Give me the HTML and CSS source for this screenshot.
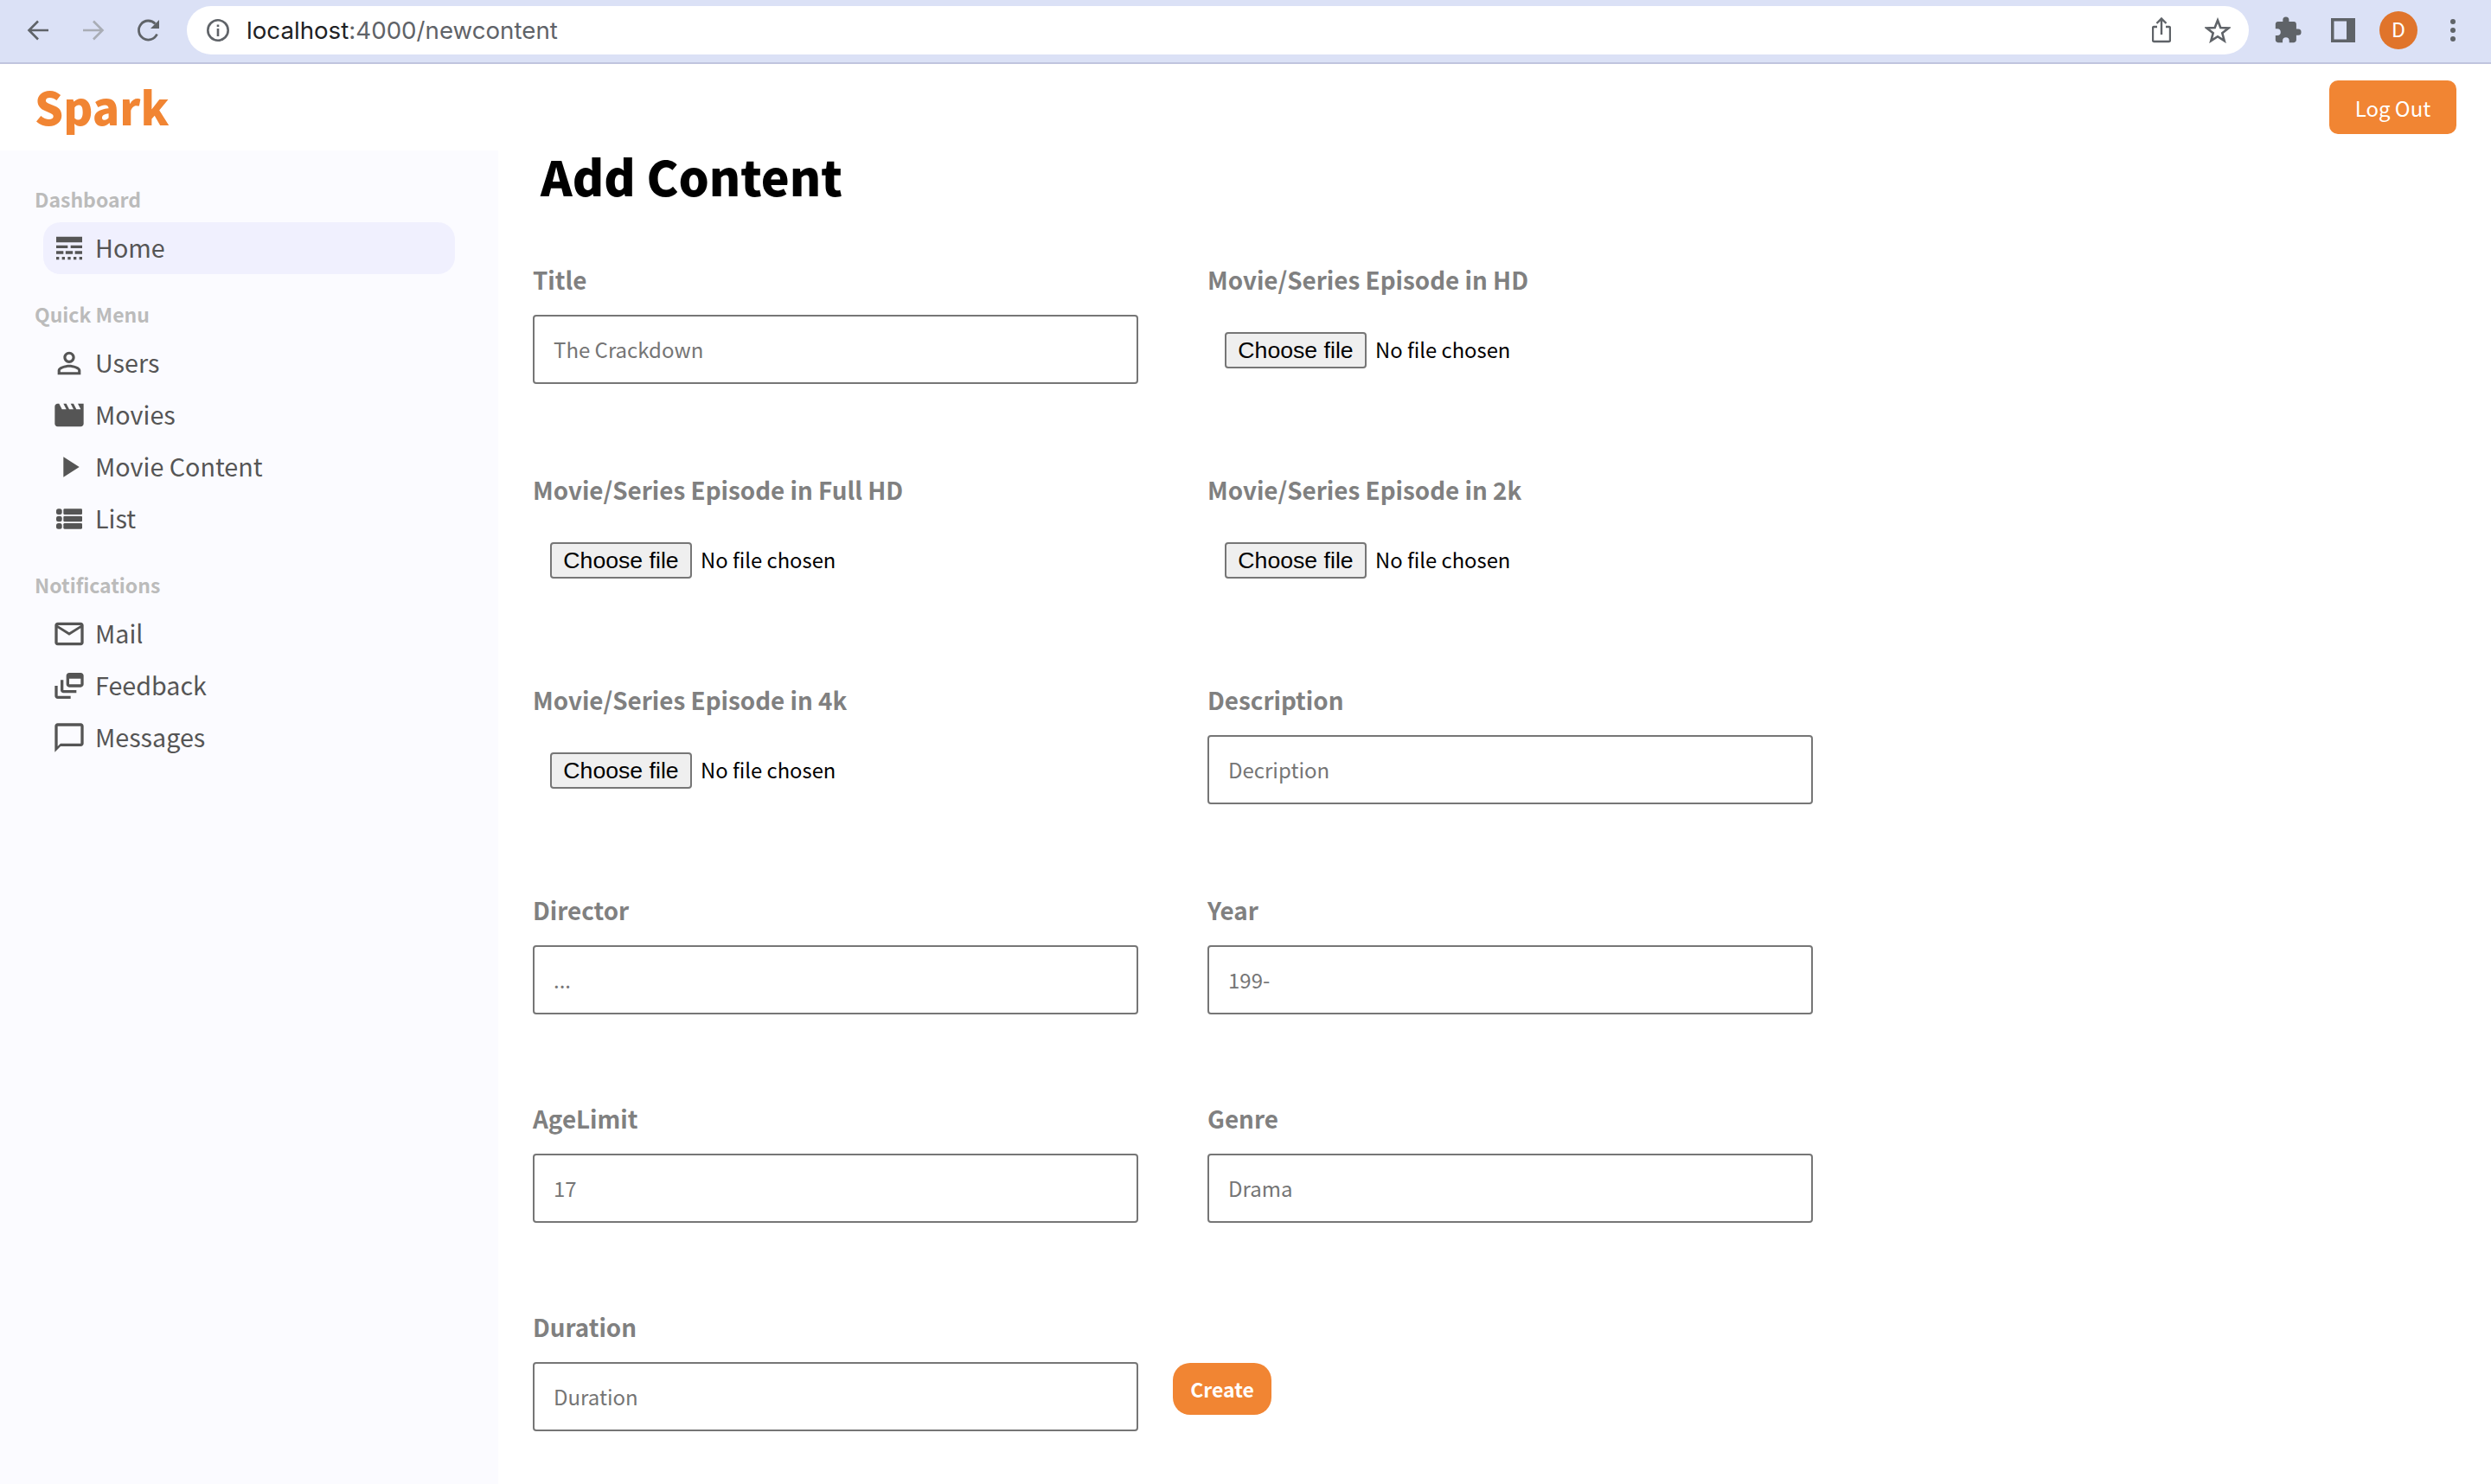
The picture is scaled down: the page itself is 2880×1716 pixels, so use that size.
FILE: index.html
```html
<!DOCTYPE html>
<html lang="en">
<head>
  <meta charset="UTF-8" />
  <title>Spark</title>
  <link rel="stylesheet" href="styles.css">
</head>
<body>
  <div class="browser-bar">
    <svg class="nav-icon" viewBox="0 0 28 28"><path d="M26 14H4M14 3.500 3.500 14 14 24.500" fill="none" stroke="#5f6368" stroke-width="2.600"/></svg>
    <svg class="nav-icon" viewBox="0 0 28 28"><path d="M2 14h22M14 3.500 24.500 14 14 24.500" fill="none" stroke="#a9adb5" stroke-width="2.600"/></svg>
    <svg class="nav-icon" viewBox="0 0 28 28"><path d="M23.500 18.500A11 11 0 1 1 21.500 6.500" fill="none" stroke="#5f6368" stroke-width="2.800"/><path d="M26 2v10H16z" fill="#5f6368"/></svg>
    <div class="url-box">
      <svg class="info-icon" viewBox="0 0 28 28"><circle cx="14" cy="14" r="11.700" fill="none" stroke="#5f6368" stroke-width="2.600"/><path d="M12.700 12h2.600v9h-2.600zM12.700 7.500h2.600v2.600h-2.600z" fill="#5f6368"/></svg>
      <span class="url-text">localhost<span class="url-path">:4000/newcontent</span></span>
      <svg class="share-icon" viewBox="0 0 22 30"><path d="M6 11H2.500a1.500 1.500 0 0 0-1.500 1.500v14A1.500 1.500 0 0 0 2.500 28h17a1.500 1.500 0 0 0 1.500-1.500v-14a1.500 1.500 0 0 0-1.500-1.500H16M11 20V2M5.500 7 11 1.500 16.500 7" fill="none" stroke="#5f6368" stroke-width="2.400"/></svg>
      <svg class="star-icon" viewBox="0 0 30 30"><path d="M15 3.500 18.300 12 27.500 12.500 20.300 18.300 22.700 27.200 15 22.200 7.300 27.200 9.700 18.300 2.500 12.500 11.700 12z" fill="none" stroke="#5f6368" stroke-width="2.600"/></svg>
    </div>
    <svg class="puzzle-icon" viewBox="0 0 24 24"><path d="M20.500 11H19V7c0-1.100-.9-2-2-2h-4V3.500a2.500 2.500 0 0 0-5 0V5H4c-1.100 0-2 .9-2 2v3.800h1.500a2.700 2.700 0 0 1 0 5.400H2V20c0 1.100.9 2 2 2h3.800v-1.500a2.700 2.700 0 0 1 5.400 0V22H17c1.100 0 2-.9 2-2v-4h1.500a2.500 2.500 0 0 0 0-5z" fill="#5f6368"/></svg>
    <svg class="panel-icon" viewBox="0 0 28 28"><path d="M0 0h28v28H0zM3.500 3.500v21H18v-21z" fill="#5f6368" fill-rule="evenodd"/></svg>
    <div class="avatar">D</div>
    <div class="menu-dots"><span></span><span></span><span></span></div>
  </div>

  <header class="topbar">
    <div class="logo">Spark</div>
    <button class="logout-btn">Log Out</button>
  </header>

  <div class="layout">
    <aside class="sidebar">
      <section class="side-group">
        <h3 class="side-title">Dashboard</h3>
        <ul class="side-list">
          <li class="side-item active">
            <svg class="side-icon" viewBox="0 0 24 24"><path d="M3 16h5v-2H3v2zm6.500 0h5v-2h-5v2zm6.500 0h5v-2h-5v2zM3 20h2v-2H3v2zm4 0h2v-2H7v2zm4 0h2v-2h-2v2zm4 0h2v-2h-2v2zm4 0h2v-2h-2v2zM3 12h8v-2H3v2zm10 0h8v-2h-8v2zM3 4v4h18V4H3z"/></svg>
            Home
          </li>
        </ul>
      </section>
      <section class="side-group">
        <h3 class="side-title">Quick Menu</h3>
        <ul class="side-list">
          <li class="side-item">
            <svg class="side-icon" viewBox="0 0 24 24"><path d="M12 5.900c1.160 0 2.100.94 2.100 2.100s-.94 2.100-2.100 2.100S9.900 9.160 9.900 8s.94-2.100 2.100-2.100m0 9c2.970 0 6.100 1.460 6.100 2.100v1.100H5.900V17c0-.64 3.130-2.100 6.100-2.100M12 4C9.790 4 8 5.790 8 8s1.790 4 4 4 4-1.790 4-4-1.790-4-4-4zm0 9c-2.670 0-8 1.340-8 4v3h16v-3c0-2.660-5.330-4-8-4z"/></svg>
            Users
          </li>
          <li class="side-item">
            <svg class="side-icon" viewBox="0 0 24 24"><path d="M18 4l2 4h-3l-2-4h-2l2 4h-3l-2-4H8l2 4H7L5 4H4c-1.100 0-1.990.9-1.990 2L2 18c0 1.100.9 2 2 2h16c1.100 0 2-.9 2-2V4h-4z"/></svg>
            Movies
          </li>
          <li class="side-item">
            <svg class="side-icon" viewBox="0 0 24 24"><path d="M8 5v14l11-7z"/></svg>
            Movie Content
          </li>
          <li class="side-item">
            <svg class="side-icon" viewBox="0 0 24 24"><rect x="3" y="5" width="4" height="4" rx="1.500"/><rect x="3" y="10" width="4" height="4" rx="1.500"/><rect x="3" y="15" width="4" height="4" rx="1.500"/><rect x="8" y="5" width="13" height="4" rx=".8"/><rect x="8" y="10" width="13" height="4" rx=".8"/><rect x="8" y="15" width="13" height="4" rx=".8"/></svg>
            List
          </li>
        </ul>
      </section>
      <section class="side-group">
        <h3 class="side-title">Notifications</h3>
        <ul class="side-list">
          <li class="side-item">
            <svg class="side-icon" viewBox="0 0 24 24"><path d="M20 4H4c-1.100 0-1.990.9-1.990 2L2 18c0 1.100.9 2 2 2h16c1.100 0 2-.9 2-2V6c0-1.100-.9-2-2-2zm0 14H4V8l8 5 8-5v10zm-8-7L4 6h16l-8 5z"/></svg>
            Mail
          </li>
          <li class="side-item">
            <svg class="side-icon" viewBox="0 0 24 24"><path d="M8 8H6v7c0 1.100.9 2 2 2h9v-2H8V8zM20 3h-8c-1.100 0-2 .9-2 2v6c0 1.100.9 2 2 2h8c1.100 0 2-.9 2-2V5c0-1.100-.9-2-2-2zm0 8h-8V7h8v4zM4 12H2v7c0 1.100.9 2 2 2h9v-2H4v-7z"/></svg>
            Feedback
          </li>
          <li class="side-item">
            <svg class="side-icon" viewBox="0 0 24 24"><path d="M20 2H4c-1.100 0-2 .9-2 2v18l4-4h14c1.100 0 2-.9 2-2V4c0-1.100-.9-2-2-2zm0 14H6l-2 2V4h16v12z"/></svg>
            Messages
          </li>
        </ul>
      </section>
    </aside>

    <main class="content">
      <h1 class="page-title">Add Content</h1>
      <form class="content-form">
        <div class="form-row">
          <div class="form-item">
            <label>Title</label>
            <input type="text" placeholder="The Crackdown" />
          </div>
          <div class="form-item">
            <label>Movie/Series Episode in HD</label>
            <div class="file-field"><button type="button" class="file-btn">Choose file</button><span class="file-name">No file chosen</span></div>
          </div>
        </div>
        <div class="form-row">
          <div class="form-item">
            <label>Movie/Series Episode in Full HD</label>
            <div class="file-field"><button type="button" class="file-btn">Choose file</button><span class="file-name">No file chosen</span></div>
          </div>
          <div class="form-item">
            <label>Movie/Series Episode in 2k</label>
            <div class="file-field"><button type="button" class="file-btn">Choose file</button><span class="file-name">No file chosen</span></div>
          </div>
        </div>
        <div class="form-row">
          <div class="form-item">
            <label>Movie/Series Episode in 4k</label>
            <div class="file-field"><button type="button" class="file-btn">Choose file</button><span class="file-name">No file chosen</span></div>
          </div>
          <div class="form-item">
            <label>Description</label>
            <input type="text" placeholder="Decription" />
          </div>
        </div>
        <div class="form-row">
          <div class="form-item">
            <label>Director</label>
            <input type="text" placeholder="..." />
          </div>
          <div class="form-item">
            <label>Year</label>
            <input type="text" placeholder="199-" />
          </div>
        </div>
        <div class="form-row">
          <div class="form-item">
            <label>AgeLimit</label>
            <input type="text" placeholder="17" />
          </div>
          <div class="form-item">
            <label>Genre</label>
            <input type="text" placeholder="Drama" />
          </div>
        </div>
        <div class="form-row form-row-last">
          <div class="form-item">
            <label>Duration</label>
            <input type="text" placeholder="Duration" />
          </div>
          <button type="button" class="create-btn">Create</button>
        </div>
      </form>
    </main>
  </div>
</body>
</html>
```

FILE: styles.css
```css
* { margin: 0; padding: 0; box-sizing: border-box; }

html, body {
  height: 100%;
}

body {
  font-family: "Noto Sans CJK JP", "Source Sans Pro", "Open Sans", sans-serif;
  background: #fff;
  display: flex;
  flex-direction: column;
  overflow: hidden;
}

/* browser chrome */
.browser-bar {
  height: 74px;
  flex-shrink: 0;
  display: flex;
  align-items: center;
  padding: 0 30px 2px;
  background: #dbe1f6;
  border-bottom: 2px solid #c0c4de;
}

.nav-icon {
  width: 28px;
  height: 28px;
  margin-right: 36px;
}

.url-box {
  width: 2384px;
  height: 56px;
  margin-left: -6px;
  padding: 0 21px 0 22px;
  display: flex;
  align-items: center;
  background: #fff;
  border-radius: 28px;
}

.info-icon {
  width: 28px;
  height: 28px;
  margin-right: 19px;
}

.url-text {
  flex: 1;
  font-family: "Inter", sans-serif;
  font-size: 27.700px;
  color: #202124;
}

.url-path {
  color: #5f6368;
}

.share-icon {
  width: 22px;
  height: 30px;
  margin-right: 39px;
}

.star-icon {
  width: 30px;
  height: 30px;
}

.puzzle-icon {
  width: 34px;
  height: 34px;
  margin-left: 28px;
}

.panel-icon {
  width: 28px;
  height: 28px;
  margin-left: 33px;
}

.avatar {
  width: 44px;
  height: 44px;
  margin-left: 28px;
  border-radius: 50%;
  background: #e0742b;
  color: #fff;
  font-family: "Roboto", sans-serif;
  font-size: 24px;
  line-height: 44px;
  text-align: center;
}

.menu-dots {
  margin-left: 38px;
  display: flex;
  flex-direction: column;
  gap: 4px;
}

.menu-dots span {
  width: 6px;
  height: 6px;
  border-radius: 50%;
  background: #5f6368;
}

/* app header */
.topbar {
  height: 100px;
  flex-shrink: 0;
  display: flex;
  justify-content: space-between;
  align-items: center;
  padding: 0 40px;
}

.logo {
  margin-bottom: 2px;
  font-size: 52px;
  line-height: 70px;
  font-weight: 900;
  color: #f18533;
}

.logout-btn {
  width: 147px;
  height: 62px;
  border: none;
  border-radius: 10px;
  background: #f18533;
  color: #fff;
  font-family: inherit;
  font-size: 24px;
}

.layout {
  flex: 1;
  display: flex;
  min-height: 0;
}

/* sidebar */
.sidebar {
  width: 576px;
  flex-shrink: 0;
  padding: 38px 50px 0 0;
  background: #fbfbff;
}

.side-group {
  margin-bottom: 28px;
}

.side-title {
  margin: 0 0 8px 40px;
  font-size: 23px;
  line-height: 37px;
  font-weight: 700;
  color: #bbb;
}

.side-list {
  list-style: none;
  margin-left: 50px;
}

.side-item {
  height: 60px;
  padding: 0 0 4px 10px;
  display: flex;
  align-items: center;
  border-radius: 20px;
  font-size: 28.700px;
  color: #555;
}

.side-item.active {
  background: #f0f0fe;
}

.side-icon {
  width: 40px;
  height: 40px;
  margin: 4px 10px 0 0;
  fill: #555;
}

/* form */
.content {
  flex: 1;
  padding-left: 40px;
}

.page-title {
  height: 129px;
  margin-left: 9px;
  font-size: 55.500px;
  line-height: 58px;
  font-weight: 900;
  color: #000;
}

.form-row {
  display: flex;
  align-items: flex-start;
  gap: 80px;
  margin-bottom: 100px;
}

.form-row-last {
  gap: 40px;
  margin-bottom: 0;
}

.form-item {
  width: 700px;
  display: flex;
  flex-direction: column;
}

.form-item label {
  height: 40px;
  margin-bottom: 21px;
  font-size: 27.800px;
  line-height: 40px;
  font-weight: 600;
  color: #808080;
}

.form-item input[type="text"] {
  height: 80px;
  padding: 0 22px 2px;
  border: 2px solid #767676;
  border-radius: 4px;
  font-family: inherit;
  font-size: 24px;
}

.form-item input::placeholder {
  color: #757575;
}

.file-field {
  height: 82px;
  padding: 20px;
  display: flex;
  align-items: center;
  font-size: 23.800px;
  color: #000;
}

.file-name {
  margin-bottom: 3px;
}

.file-btn {
  width: 164px;
  height: 42px;
  margin-right: 10px;
  border: 2px solid #767676;
  border-radius: 4px;
  background: #efefef;
  font-family: "Liberation Sans", Arial, sans-serif;
  font-size: 26.670px;
  color: #000;
}

.create-btn {
  width: 114px;
  height: 60px;
  margin-top: 62px;
  border: none;
  border-radius: 20px;
  background: #f18533;
  color: #fff;
  font-family: inherit;
  font-size: 23px;
  font-weight: 700;
}
```
